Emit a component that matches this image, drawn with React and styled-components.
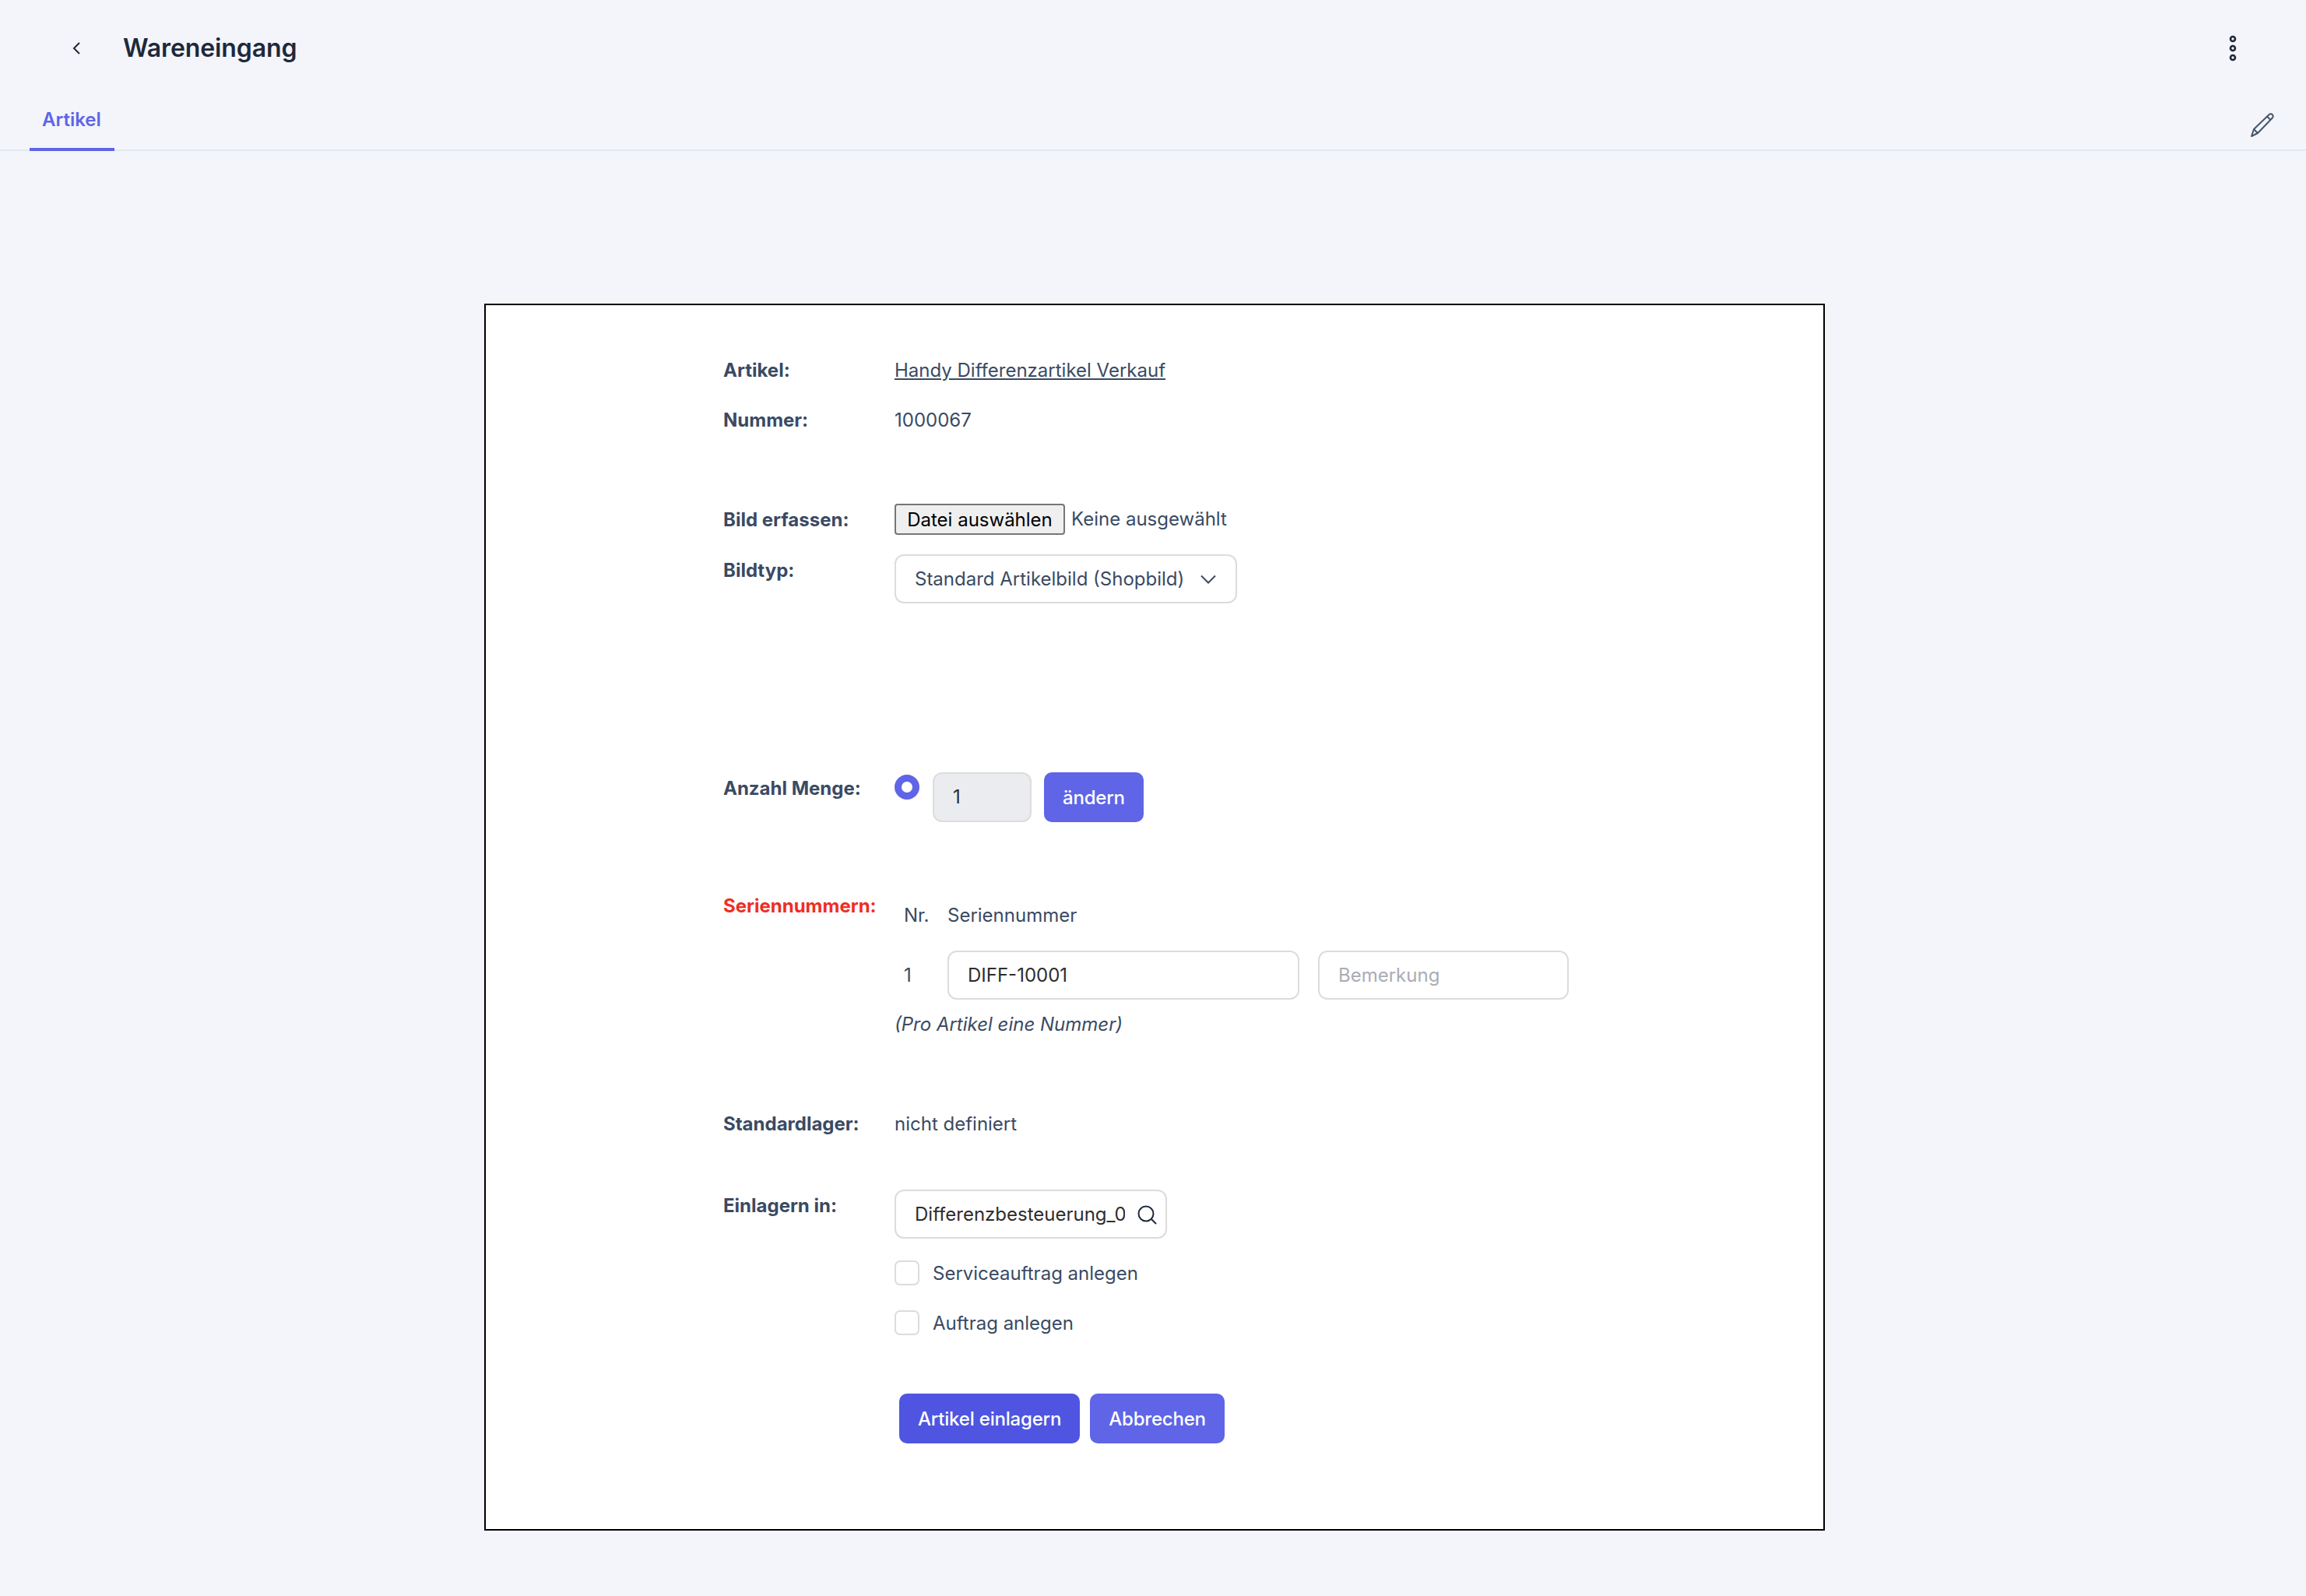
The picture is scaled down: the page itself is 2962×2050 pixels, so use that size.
import React from 'react'
import styled, { createGlobalStyle } from 'styled-components'

const GlobalStyle = createGlobalStyle`
  html, body { margin: 0; padding: 0; background: #f3f5fa; }
  body { font-family: Inter, "Liberation Sans", sans-serif; font-size: 24px; color: #3a4a63; }
  * { box-sizing: border-box; }
`

const Page = styled.div`
  width: 2962px;
  min-height: 2050px;
  background: #f3f5fa;
`
const TopBar = styled.header`
  height: 124px;
  display: flex;
  align-items: center;
  padding: 0 88px 0 92px;
`
const BackIcon = styled.svg`
  width: 12px;
  height: 18px;
  margin-right: 54px;
  flex: none;
`
const Title = styled.h1`
  flex: 1;
  margin: 0;
  font-size: 32px;
  font-weight: 600;
  letter-spacing: -0.1px;
  line-height: 42px;
  color: #1e293b;
`
const TabBar = styled.nav`
  height: 70px;
  display: flex;
  align-items: flex-start;
  justify-content: space-between;
  padding: 0 38px;
  border-bottom: 2px solid #e2e8f0;
`
const Tab = styled.div`
  height: 70px;
  padding: 10px 17px 0 16px;
  line-height: 40px;
  font-weight: 600;
  color: #5f65e6;
  border-bottom: 4px solid #5f65e6;
`
const EditIcon = styled.svg`
  width: 32px;
  height: 32px;
  margin: 20px 2px 0 0;
`
const Card = styled.main`
  width: 1722px;
  height: 1576px;
  margin: 196px 0 0 622px;
  padding: 63px 0 0 305px;
  background: #fff;
  border: 2px solid #000;
`
const Row = styled.div`
  display: grid;
  grid-template-columns: 220px 1fr;
  align-items: start;
  margin-top: ${p => p.$gap || 0}px;
`
const Label = styled.div`
  height: 40px;
  font-weight: 700;
  line-height: 42px;
  color: ${p => (p.$error ? '#ee2e24' : '#3a4a63')};
`
const Value = styled.div`
  height: 40px;
  line-height: 42px;
`
const ArticleLink = styled.a`
  color: inherit;
  text-decoration: underline;
`
const Inline = styled.div`
  display: flex;
  align-items: ${p => p.$align || 'center'};
  gap: ${p => p.$gap || 0}px;
`
const FileButton = styled.button`
  width: 219px;
  height: 40px;
  padding: 0;
  font: inherit;
  color: #000;
  background: #efefef;
  border: 2px solid #767676;
  border-radius: 4px;
`
const FileStatus = styled.span`
  line-height: 40px;
`
const SelectBox = styled.div`
  width: 440px;
  height: 63px;
  display: flex;
  align-items: center;
  justify-content: space-between;
  padding: 0 24px;
  background: #fff;
  border: 2px solid #dcdcdc;
  border-radius: 12px;
`
const TextField = styled.input`
  display: block;
  width: ${p => p.$width}px;
  height: ${p => p.$height || 63}px;
  padding: 0 ${p => p.$right || 24}px 1px 24px;
  font: inherit;
  color: #2d2d2d;
  background: ${p => (p.$disabled ? '#ebecf0' : '#fff')};
  border: 2px solid #dcdcdc;
  border-radius: 12px;
  outline: none;
  &::placeholder { color: #a9adb5; opacity: 1; }
`
const Radio = styled.span`
  display: block;
  width: 32px;
  height: 32px;
  margin: 3px 1px 0 0;
  border-radius: 50%;
  background: #fff;
  border: 9px solid #5f65e6;
  flex: none;
`
const Button = styled.button`
  height: 64px;
  padding: 0 24px;
  font: inherit;
  font-weight: 500;
  letter-spacing: -0.2px;
  color: #fff;
  background: ${p => (p.$dark ? '#4f55e0' : '#5f65e6')};
  border: none;
  border-radius: 10px;
`
const SerialBlock = styled.div`
  padding-top: 13px;
`
const SerialGrid = styled.div`
  display: grid;
  grid-template-columns: 56px 452px 346px;
  row-gap: 25px;
  align-items: center;
  padding-left: 12px;
`
const SerialCell = styled.div`
  line-height: 40px;
`
const SerialNote = styled.div`
  margin-left: 24px;
`
const Hint = styled.div`
  margin-top: 12px;
  line-height: 40px;
  font-style: italic;
`
const SearchWrap = styled.div`
  position: relative;
  width: 350px;
`
const SearchIcon = styled.svg`
  position: absolute;
  top: 19px;
  right: 13px;
  width: 26px;
  height: 26px;
`
const CheckRow = styled.label`
  display: flex;
  align-items: center;
  gap: 17px;
  height: 32px;
  margin-top: ${p => p.$gap}px;
`
const CheckBox = styled.span`
  display: block;
  width: 32px;
  height: 32px;
  background: #fff;
  border: 2px solid #dcdcdc;
  border-radius: 7px;
`
const Actions = styled.div`
  display: flex;
  gap: 13px;
  margin: 75px 0 0 6px;
`

export default function App() {
  return (
    <Page>
      <GlobalStyle />
      <TopBar>
        <BackIcon viewBox="0 0 12 18" fill="none" stroke="#1e293b" strokeWidth="2">
          <path d="M10 2 3 9l7 7" />
        </BackIcon>
        <Title>Wareneingang</Title>
        <svg width="12" height="36" viewBox="0 0 12 36" fill="none" stroke="#1e293b" strokeWidth="2.6">
          <circle cx="6" cy="6" r="3" />
          <circle cx="6" cy="18" r="3" />
          <circle cx="6" cy="30" r="3" />
        </svg>
      </TopBar>
      <TabBar>
        <Tab>Artikel</Tab>
        <EditIcon viewBox="0 0 32 32" fill="none" stroke="#475569" strokeWidth="2" strokeLinejoin="round">
          <path d="M2 31l3-9L24.500 3.200a3 3 0 0 1 4.300 0 3 3 0 0 1 0 4.300L10 27z" />
          <path d="M5 22l5 5M22 5.500l4.700 4.700" />
        </EditIcon>
      </TabBar>
      <Card>
        <Row>
          <Label>Artikel:</Label>
          <Value><ArticleLink href="#">Handy Differenzartikel Verkauf</ArticleLink></Value>
        </Row>
        <Row $gap={24}>
          <Label>Nummer:</Label>
          <Value>1000067</Value>
        </Row>
        <Row $gap={88}>
          <Label>Bild erfassen:</Label>
          <Inline $gap={8}>
            <FileButton>Datei auswählen</FileButton>
            <FileStatus>Keine ausgewählt</FileStatus>
          </Inline>
        </Row>
        <Row $gap={25}>
          <Label>Bildtyp:</Label>
          <SelectBox>
            <span>Standard Artikelbild (Shopbild)</span>
            <svg width="22" height="14" viewBox="0 0 22 14" fill="none" stroke="#3a4a63" strokeWidth="2">
              <path d="M2 2.500l9 9 9-9" />
            </svg>
          </SelectBox>
        </Row>
        <Row $gap={217}>
          <Label>Anzahl Menge:</Label>
          <Inline $align="flex-start" $gap={16}>
            <Radio />
            <TextField $width={127} $height={64} $disabled value="1" readOnly />
            <Button>ändern</Button>
          </Inline>
        </Row>
        <Row $gap={87}>
          <Label $error>Seriennummern:</Label>
          <SerialBlock>
            <SerialGrid>
              <SerialCell>Nr.</SerialCell>
              <SerialCell>Seriennummer</SerialCell>
              <span />
              <SerialCell>1</SerialCell>
              <TextField $width={452} value="DIFF-10001" readOnly />
              <SerialNote>
                <TextField $width={322} placeholder="Bemerkung" readOnly />
              </SerialNote>
            </SerialGrid>
            <Hint>(Pro Artikel eine Nummer)</Hint>
          </SerialBlock>
        </Row>
        <Row $gap={87}>
          <Label>Standardlager:</Label>
          <Value>nicht definiert</Value>
        </Row>
        <Row $gap={65}>
          <Label>Einlagern in:</Label>
          <div>
            <SearchWrap>
              <TextField $width={350} $right={52} value="Differenzbesteuerung_01" readOnly />
              <SearchIcon viewBox="0 0 26 26" fill="none" stroke="#1e293b" strokeWidth="2">
                <circle cx="12" cy="12" r="9.500" />
                <path d="M19 19l6 6" />
              </SearchIcon>
            </SearchWrap>
            <CheckRow $gap={28}>
              <CheckBox />
              Serviceauftrag anlegen
            </CheckRow>
            <CheckRow $gap={32}>
              <CheckBox />
              Auftrag anlegen
            </CheckRow>
            <Actions>
              <Button $dark>Artikel einlagern</Button>
              <Button>Abbrechen</Button>
            </Actions>
          </div>
        </Row>
      </Card>
    </Page>
  )
}
